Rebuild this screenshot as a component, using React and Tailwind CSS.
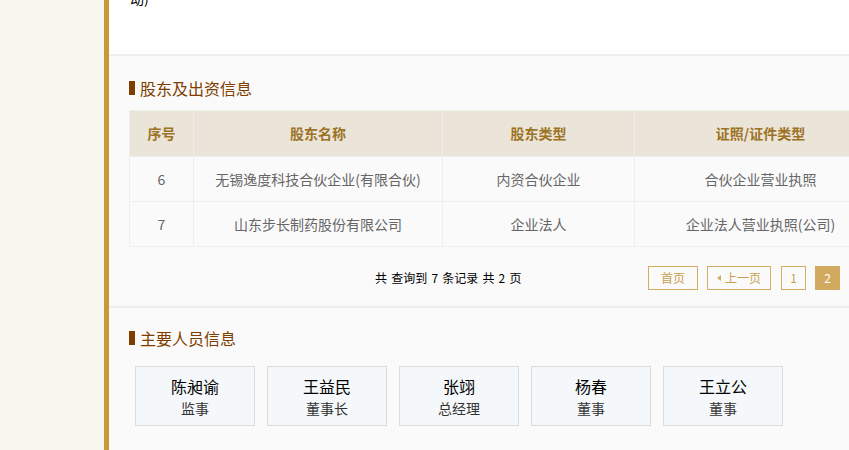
import React from "react";

const font = { fontFamily: '"Noto Sans CJK SC", "Noto Sans", sans-serif' };

function Heading({ children }) {
  return (
    <div className="flex items-center h-[24px]">
      <div className="w-[6px] h-[14px] bg-[#7f3d00]" />
      <div className="ml-[5px] text-[16px] leading-[24px] text-[#7f3d00]">{children}</div>
    </div>
  );
}

const rows = [
  ["6", "无锡逸度科技合伙企业(有限合伙)", "内资合伙企业", "合伙企业营业执照"],
  ["7", "山东步长制药股份有限公司", "企业法人", "企业法人营业执照(公司)"],
];

const people = [
  ["陈昶谕", "监事"],
  ["王益民", "董事长"],
  ["张翊", "总经理"],
  ["杨春", "董事"],
  ["王立公", "董事"],
];

export default function App() {
  return (
    <div className="flex w-[849px] h-[450px] overflow-hidden" style={font}>
      <div className="w-[104px] shrink-0 bg-[#faf7ef]" />
      <div className="w-[5px] shrink-0 bg-[#c9983a]" />
      <div className="flex-1 min-w-0 overflow-hidden bg-[#fafafa]">
        <div className="h-[56px] bg-white border-b-2 border-[#eeeeee] overflow-hidden">
          <div className="ml-[21px] mt-[-12px] text-[14px] leading-[20px] text-black">动)</div>
        </div>
        <div className="pl-[20px] pt-[20px] border-b-2 border-[#eeeeee]">
          <Heading>股东及出资信息</Heading>
          <table className="mt-[10px] w-[757px] table-fixed border-collapse text-[14px]">
            <colgroup>
              <col className="w-[64px]" />
              <col className="w-[249px]" />
              <col className="w-[192px]" />
              <col className="w-[252px]" />
            </colgroup>
            <thead>
              <tr className="h-[46px] bg-[#ebe4d8]">
                {["序号", "股东名称", "股东类型", "证照/证件类型"].map((h) => (
                  <th key={h} className="border border-[#eeeeee] font-bold text-[#9c7324] text-center">
                    {h}
                  </th>
                ))}
              </tr>
            </thead>
            <tbody>
              {rows.map((r) => (
                <tr key={r[0]} className="h-[45px] bg-[#fafafa]">
                  {r.map((c, i) => (
                    <td key={i} className="border border-[#eeeeee] text-[#666666] text-center">
                      {c}
                    </td>
                  ))}
                </tr>
              ))}
            </tbody>
          </table>
          <div className="flex items-center mt-[19px] mb-[16px] h-[24px]">
            <div className="w-[519px] shrink-0 pl-[246px] text-[12px] text-black whitespace-nowrap [word-spacing:1.5px]">
              共 查询到 7 条记录 共 2 页
            </div>
            <div className="flex items-center gap-[9px] text-[12px] text-[#c9a04f]">
              <div className="w-[50px] h-[24px] border border-[#d4ad62] flex items-center justify-center">首页</div>
              <div className="w-[64px] h-[24px] border border-[#d4ad62] flex items-center justify-center">
                <span className="w-0 h-0 border-y-[3px] border-y-transparent border-r-[4px] border-r-[#d4ad62] mr-[4px]" />
                上一页
              </div>
              <div className="w-[25px] h-[24px] border border-[#d4ad62] flex items-center justify-center ml-[1px]">1</div>
              <div className="w-[25px] h-[24px] bg-[#d1a95f] text-white flex items-center justify-center">2</div>
            </div>
          </div>
        </div>
        <div className="pl-[20px] pt-[18px]">
          <Heading>主要人员信息</Heading>
          <div className="flex gap-[12px] mt-[16px] ml-[6px]">
            {people.map(([n, r]) => (
              <div key={n} className="w-[120px] h-[60px] bg-[#f5f8fa] border border-[#dcdcdc] flex flex-col items-center pt-[8px]">
                <div className="text-[16px] leading-[22px] text-black">{n}</div>
                <div className="text-[14px] leading-[22px] text-[#333333]">{r}</div>
              </div>
            ))}
          </div>
        </div>
      </div>
    </div>
  );
}
